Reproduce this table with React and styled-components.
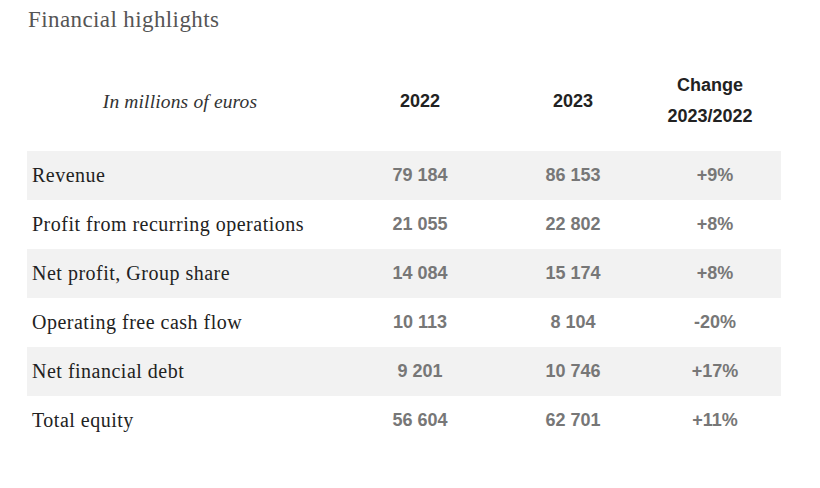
import React from "react";
import styled, { createGlobalStyle } from "styled-components";

const Global = createGlobalStyle`
  html, body { margin: 0; padding: 0; background: #fff; }
  body { font-family: "Liberation Serif", serif; }
`;

const Page = styled.div`
  width: 820px;
  height: 488px;
  padding: 6px 0 0 27px;
  box-sizing: border-box;
`;

const Title = styled.h2`
  margin: 0 0 27px 1px;
  font-family: "Liberation Serif", serif;
  font-weight: normal;
  font-size: 23px;
  letter-spacing: 0.4px;
  line-height: 28px;
  color: #555;
`;

const Grid = styled.div`
  display: grid;
  grid-template-columns: 316px 154px 152px 132px;
  width: 754px;
`;

const HeadCell = styled.div`
  height: 80px;
  padding-bottom: 10px;
  display: flex;
  flex-direction: column;
  align-items: center;
  justify-content: center;
  font-family: "Liberation Sans", Arial, sans-serif;
  font-weight: bold;
  font-size: 18px;
  line-height: 31px;
  color: #222;
  text-align: center;
  padding-right: ${(p) => p.$pr || 0}px;
`;

const UnitCell = styled(HeadCell)`
  font-family: "Liberation Serif", serif;
  font-style: italic;
  font-weight: normal;
  font-size: 19.5px;
  letter-spacing: 0.15px;
  color: #333;
`;

const Row = styled.div`
  display: contents;
`;

const Cell = styled.div`
  height: 49px;
  display: flex;
  align-items: center;
  justify-content: center;
  background: ${(p) => (p.$shade ? "#f2f2f2" : "#fff")};
  font-family: "Liberation Sans", Arial, sans-serif;
  font-weight: bold;
  font-size: 18px;
  color: #777;
`;

const LabelCell = styled(Cell)`
  justify-content: flex-start;
  padding-left: 5px;
  font-family: "Liberation Serif", serif;
  font-weight: normal;
  font-size: 20px;
  letter-spacing: 0.5px;
  color: #222;
`;

const rows = [
  ["Revenue", "79 184", "86 153", "+9%"],
  ["Profit from recurring operations", "21 055", "22 802", "+8%"],
  ["Net profit, Group share", "14 084", "15 174", "+8%"],
  ["Operating free cash flow", "10 113", "8 104", "-20%"],
  ["Net financial debt", "9 201", "10 746", "+17%"],
  ["Total equity", "56 604", "62 701", "+11%"],
];

export default function App() {
  return (
    <Page>
      <Global />
      <Title>Financial highlights</Title>
      <Grid>
        <UnitCell $pr={10}>In millions of euros</UnitCell>
        <HeadCell>2022</HeadCell>
        <HeadCell>2023</HeadCell>
        <HeadCell $pr={10}>
          <span>Change</span>
          <span>2023/2022</span>
        </HeadCell>
        {rows.map((r, i) => (
          <Row key={r[0]}>
            <LabelCell $shade={i % 2 === 0}>{r[0]}</LabelCell>
            <Cell $shade={i % 2 === 0}>{r[1]}</Cell>
            <Cell $shade={i % 2 === 0}>{r[2]}</Cell>
            <Cell $shade={i % 2 === 0}>{r[3]}</Cell>
          </Row>
        ))}
      </Grid>
    </Page>
  );
}
